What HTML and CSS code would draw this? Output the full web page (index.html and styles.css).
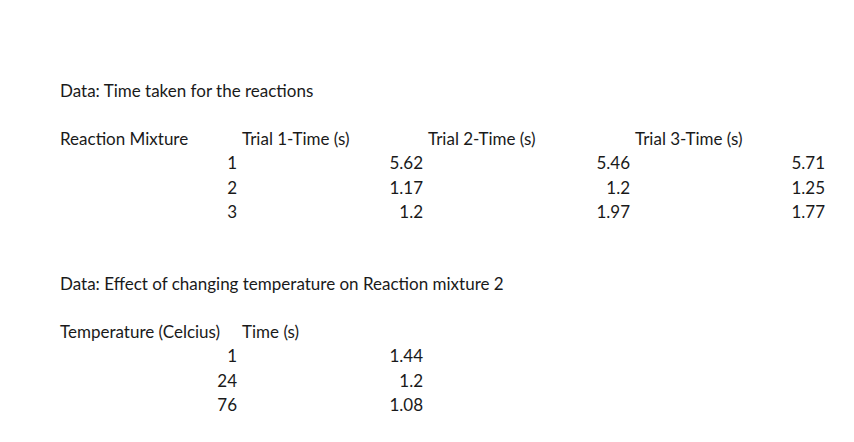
FILE: index.html
```html
<!DOCTYPE html>
<html>
<head>
<meta charset="utf-8">
<link rel="stylesheet" href="styles.css">
</head>
<body>
<div class="sheet">
  <div class="row"><div class="cell span">Data: Time taken for the reactions</div></div>
  <div class="row"></div>
  <div class="row">
    <div class="cell">Reaction Mixture</div>
    <div class="cell">Trial 1-Time (s)</div>
    <div class="cell">Trial 2-Time (s)</div>
    <div class="cell">Trial 3-Time (s)</div>
  </div>
  <div class="row">
    <div class="cell num">1</div><div class="cell num">5.62</div><div class="cell num">5.46</div><div class="cell num">5.71</div>
  </div>
  <div class="row">
    <div class="cell num">2</div><div class="cell num">1.17</div><div class="cell num">1.2</div><div class="cell num">1.25</div>
  </div>
  <div class="row">
    <div class="cell num">3</div><div class="cell num">1.2</div><div class="cell num">1.97</div><div class="cell num">1.77</div>
  </div>
  <div class="row"></div>
  <div class="row"></div>
  <div class="row"><div class="cell span">Data: Effect of changing temperature on Reaction mixture 2</div></div>
  <div class="row"></div>
  <div class="row">
    <div class="cell">Temperature (Celcius)</div>
    <div class="cell">Time (s)</div>
  </div>
  <div class="row"><div class="cell num">1</div><div class="cell num">1.44</div></div>
  <div class="row"><div class="cell num">24</div><div class="cell num">1.2</div></div>
  <div class="row"><div class="cell num">76</div><div class="cell num">1.08</div></div>
</div>
</body>
</html>
```

FILE: styles.css
```css
html, body {
  margin: 0;
  padding: 0;
  background: #ffffff;
}
.sheet {
  padding: 79px 0 0 58px;
  font-family: Lato, "Liberation Sans", sans-serif;
  font-size: 17px;
  color: #1a1a1a;
}
.row {
  display: grid;
  grid-template-columns: 182px 186px 207px 195px;
  height: 24.125px;
  line-height: 24px;
}
.cell {
  padding: 0 2px;
  white-space: nowrap;
}
.cell.span {
  grid-column: 1 / -1;
}
.cell.num {
  text-align: right;
  padding-right: 3px;
}
```
